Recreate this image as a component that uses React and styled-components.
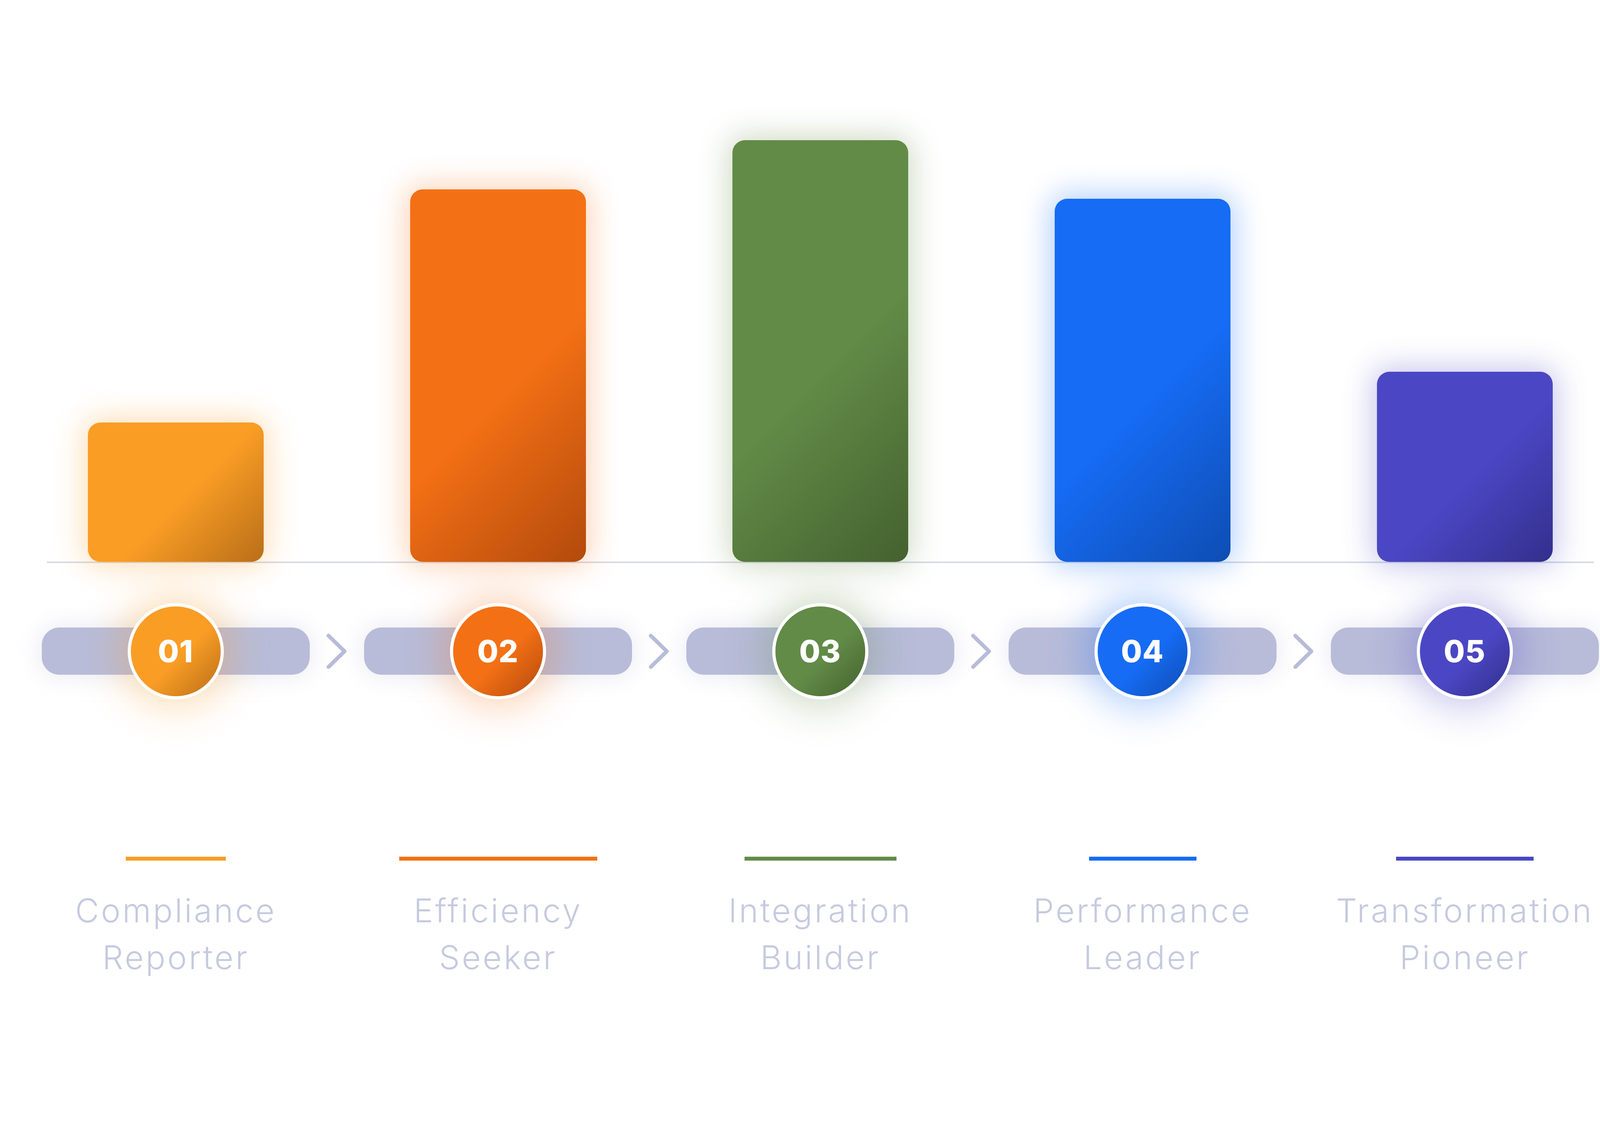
import React from "react";
import styled, { createGlobalStyle } from "styled-components";

const GlobalStyle = createGlobalStyle`
  html, body {
    margin: 0;
    padding: 0;
    background: #ffffff;
  }
  body {
    font-family: "Inter", "Lato", "Liberation Sans", sans-serif;
  }
`;

const Page = styled.div`
  box-sizing: border-box;
  width: 4200px;
  padding: 359px 37.5px 400px;
`;

const ChartRow = styled.div`
  display: grid;
  grid-template-columns: repeat(5, 825px);
  height: 1080px;
`;

const BarCell = styled.div`
  display: flex;
  align-items: flex-end;
  justify-content: center;
`;

const Bar = styled.div`
  width: 450px;
  height: ${(p) => p.$h}px;
  border-radius: 32px;
  background: linear-gradient(135deg, ${(p) => p.$color} 0%, ${(p) => p.$color} 54%, ${(p) => p.$dark} 100%);
  box-shadow: 0 0 75px 12px ${(p) => p.$glow};
  position: relative;
  z-index: 1;
`;

const Baseline = styled.div`
  height: 4px;
  margin: -1px 82.5px 0;
  background: #d8dae6;
`;

const StepsRow = styled.div`
  display: flex;
  align-items: center;
  padding: 0 69px;
  margin-top: 102px;
  height: 247px;
`;

const Pill = styled.div`
  width: 686px;
  height: 121px;
  border-radius: 45px;
  background: #b8bcd9;
  box-shadow: 0 0 60px 6px rgba(184, 188, 217, 0.28);
  display: flex;
  align-items: center;
  justify-content: center;
  flex-shrink: 0;
`;

const Badge = styled.div`
  width: 230px;
  height: 230px;
  border-radius: 50%;
  border: 8px solid #ffffff;
  background: linear-gradient(135deg, ${(p) => p.$color} 0%, ${(p) => p.$color} 55%, ${(p) => p.$dark} 100%);
  box-shadow: 0 0 100px 22px ${(p) => p.$glow};
  display: flex;
  align-items: center;
  justify-content: center;
  color: #ffffff;
  font-family: "Inter", "Liberation Sans", sans-serif;
  font-weight: 800;
  font-size: 78px;
  letter-spacing: 1px;
  flex-shrink: 0;
`;

const ChevronSlot = styled.div`
  width: 139px;
  display: flex;
  justify-content: center;
  align-items: center;
  flex-shrink: 0;
`;

const LabelsRow = styled.div`
  display: grid;
  grid-template-columns: repeat(5, 825px);
  margin-top: 403px;
`;

const LabelCell = styled.div`
  display: flex;
  flex-direction: column;
  align-items: center;
`;

const Accent = styled.div`
  width: ${(p) => p.$w}px;
  height: 10px;
  background: ${(p) => p.$color};
`;

const Label = styled.div`
  margin-top: 68px;
  font-family: "Inter", "Lato", "Liberation Sans", sans-serif;
  font-weight: 300;
  font-size: 84px;
  line-height: 120px;
  letter-spacing: 5px;
  color: #c5cadf;
  text-align: center;
  white-space: nowrap;
`;

const steps = [
  {
    n: "01",
    color: "#f99d25",
    dark: "#b96e18",
    glow: "rgba(249, 157, 37, 0.32)",
    h: 357,
    line: 256,
    label: ["Compliance", "Reporter"],
  },
  {
    n: "02",
    color: "#f47015",
    dark: "#b24a0c",
    glow: "rgba(244, 112, 21, 0.3)",
    h: 954,
    line: 507,
    label: ["Efficiency", "Seeker"],
  },
  {
    n: "03",
    color: "#628b47",
    dark: "#44612f",
    glow: "rgba(98, 139, 71, 0.3)",
    h: 1080,
    line: 389,
    label: ["Integration", "Builder"],
  },
  {
    n: "04",
    color: "#166cf5",
    dark: "#0e4db3",
    glow: "rgba(22, 108, 245, 0.32)",
    h: 930,
    line: 275,
    label: ["Performance", "Leader"],
  },
  {
    n: "05",
    color: "#4b47c4",
    dark: "#332f8c",
    glow: "rgba(75, 71, 196, 0.3)",
    h: 487,
    line: 352,
    label: ["Transformation", "Pioneer"],
  },
];

const Chevron = () => (
  <svg width="52" height="90" viewBox="0 0 52 90">
    <polyline
      points="5,5 46,45 5,85"
      fill="none"
      stroke="#b8bcd9"
      strokeWidth="10"
      strokeLinecap="round"
      strokeLinejoin="round"
    />
  </svg>
);

const App = () => {
  return (
    <>
      <GlobalStyle />
      <Page>
        <ChartRow>
          {steps.map((s) => (
            <BarCell key={s.n}>
              <Bar $h={s.h} $color={s.color} $dark={s.dark} $glow={s.glow} />
            </BarCell>
          ))}
        </ChartRow>
        <Baseline />

        <StepsRow>
          {steps.map((s, i) => (
            <React.Fragment key={s.n}>
              {i > 0 && (
                <ChevronSlot>
                  <Chevron />
                </ChevronSlot>
              )}
              <Pill>
                <Badge $color={s.color} $dark={s.dark} $glow={s.glow}>
                  {s.n}
                </Badge>
              </Pill>
            </React.Fragment>
          ))}
        </StepsRow>

        <LabelsRow>
          {steps.map((s) => (
            <LabelCell key={s.n}>
              <Accent $w={s.line} $color={s.color} />
              <Label>
                {s.label[0]}
                <br />
                {s.label[1]}
              </Label>
            </LabelCell>
          ))}
        </LabelsRow>
      </Page>
    </>
  );
};

export default App;
